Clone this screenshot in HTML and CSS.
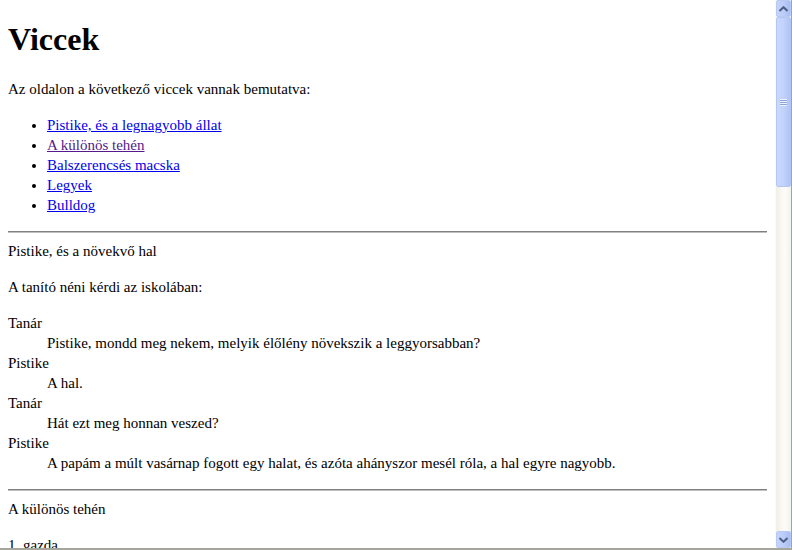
FILE: index.html
```html
<!DOCTYPE html>
<html lang="hu">
<head>
<meta charset="utf-8">
<title>Viccek</title>
<link rel="stylesheet" href="styles.css">
</head>
<body>
<div class="window">
  <div class="viewport">
    <div class="page">
      <h1 class="title">Viccek</h1>
      <p class="para">Az oldalon a következő viccek vannak bemutatva:</p>
      <ul class="toc">
        <li><a class="link" href="#j1">Pistike, és a legnagyobb állat</a></li>
        <li><a class="link visited" href="#j2">A különös tehén</a></li>
        <li><a class="link" href="#j3">Balszerencsés macska</a></li>
        <li><a class="link" href="#j4">Legyek</a></li>
        <li><a class="link" href="#j5">Bulldog</a></li>
      </ul>
      <hr class="rule">
      <div class="joke-title">Pistike, és a növekvő hal</div>
      <p class="para">A tanító néni kérdi az iskolában:</p>
      <dl class="dialog">
        <dt>Tanár</dt>
        <dd>Pistike, mondd meg nekem, melyik élőlény növekszik a leggyorsabban?</dd>
        <dt>Pistike</dt>
        <dd>A hal.</dd>
        <dt>Tanár</dt>
        <dd>Hát ezt meg honnan veszed?</dd>
        <dt>Pistike</dt>
        <dd>A papám a múlt vasárnap fogott egy halat, és azóta ahányszor mesél róla, a hal egyre nagyobb.</dd>
      </dl>
      <hr class="rule">
      <div class="joke-title">A különös tehén</div>
      <p class="para">1. gazda</p>
      <p class="para">Képzeld, a tehenem...</p>
    </div>
    <div class="scrollbar">
      <div class="sb-btn">
        <svg width="9" height="6" viewBox="0 0 9 6"><path d="M0.5 5 L4.5 1.2 L8.5 5" fill="none" stroke="#4d6185" stroke-width="2"/></svg>
      </div>
      <div class="sb-thumb">
        <div class="grip"></div>
      </div>
      <div class="sb-track"></div>
      <div class="sb-btn">
        <svg width="9" height="6" viewBox="0 0 9 6"><path d="M0.5 1 L4.5 4.8 L8.5 1" fill="none" stroke="#4d6185" stroke-width="2"/></svg>
      </div>
    </div>
  </div>
  <div class="bottom-edge"></div>
</div>
</body>
</html>
```
FILE: styles.css
```css
html, body {
  margin: 0;
  padding: 0;
  background: #ffffff;
}
.window {
  width: 792px;
  height: 550px;
  display: flex;
  flex-direction: column;
  overflow: hidden;
}
.viewport {
  height: 548px;
  display: flex;
  flex-direction: row;
}
.page {
  flex: 1;
  overflow: hidden;
  padding: 21px 8px 0 8px;
  font-family: "Liberation Serif", "Times New Roman", serif;
  font-size: 15px;
  line-height: 20px;
  color: #000;
}
.title {
  font-size: 32px;
  font-weight: bold;
  line-height: 37px;
  margin: 0 0 21px 0;
}
.para {
  margin: 16px 0;
}
.title + .para {
  margin-top: 0;
}
.joke-title {
  margin: 0;
}
.toc {
  margin: 16px 0;
  padding-left: 39px;
  list-style: disc;
}
.link {
  color: #0000ee;
  text-decoration: underline;
}
.link.visited {
  color: #551a8b;
}
.rule {
  margin: 8px 0;
  border: 0;
  border-top: 1px solid #808080;
  border-bottom: 1px solid #c0c0c0;
  height: 0;
}
.dialog {
  margin: 16px 0;
}
.dialog dd {
  margin-left: 39px;
}
.scrollbar {
  width: 17px;
  display: flex;
  flex-direction: column;
  background: #f5f4ee;
  border-left: 1px solid #fbfbf8;
  box-sizing: border-box;
  border-right: 1px solid #8ea4d6;
}
.sb-btn {
  height: 17px;
  flex: none;
  box-sizing: border-box;
  border: 1px solid #b8c9f2;
  border-radius: 2px;
  background: linear-gradient(90deg, #c3d3fd 0%, #bccdf9 50%, #a8bdf2 100%);
  display: flex;
  align-items: center;
  justify-content: center;
}
.sb-thumb {
  height: 170px;
  flex: none;
  box-sizing: border-box;
  border: 1px solid #b3c6f4;
  border-radius: 2px;
  background: linear-gradient(90deg, #cad8fd 0%, #c1d2fb 50%, #b0c4f5 100%);
  display: flex;
  align-items: center;
  justify-content: center;
}
.grip {
  width: 7px;
  height: 7px;
  background: repeating-linear-gradient(180deg, #edf2ff 0 1px, #8ca4dc 1px 2px);
}
.sb-track {
  flex: 1;
  background: linear-gradient(90deg, #f1efe6 0%, #fcfcf9 60%, #f3f1ea 100%);
}
.bottom-edge {
  height: 2px;
  background: #a7a69c;
}
```
